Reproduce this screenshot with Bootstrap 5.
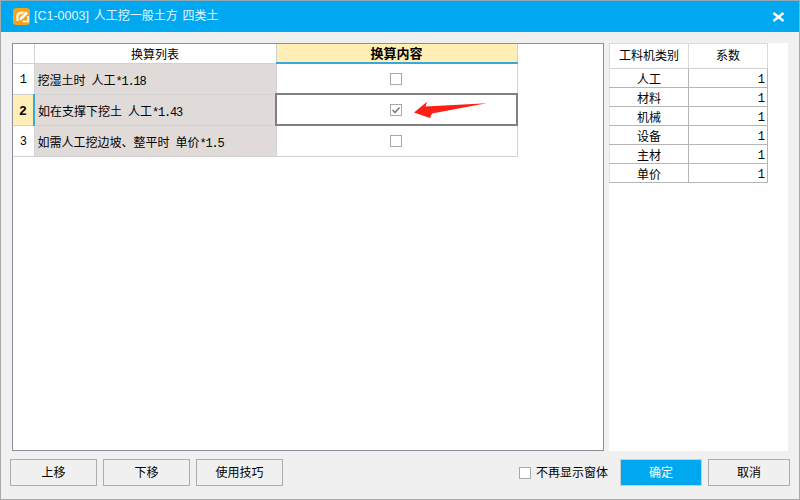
<!DOCTYPE html>
<html lang="zh-CN">
<head>
<meta charset="utf-8">
<title>换算</title>
<link href="https://cdn.jsdelivr.net/npm/bootstrap@5.3.0/dist/css/bootstrap.min.css" rel="stylesheet">
<style>
html,body{margin:0;width:800px;height:500px;overflow:hidden;background:#f0f0f0}
body{font-family:"Liberation Sans","Noto Sans CJK SC",sans-serif;font-size:12px;color:#000}
.win{width:800px;height:500px;border:1px solid #a9a9a9;border-top-color:#8fa9b8;background:#f0f0f0}
.tbar{height:31px;background:#00a8f0;color:#e8f7ff;font-size:12px;word-spacing:1.5px;padding-left:12px;padding-right:14px}
.tbar .lat{font-size:12.5px}
.logo{width:17px;height:17px;margin-right:4px}
.xbtn{width:13px;height:10px}
.body{height:419px;padding:11px 11px 0 11px;gap:5px}
.lpane{width:592px;height:408px;background:#fff;border:1px solid #8d8d99;position:relative}
.rpane{width:179px;height:408px;background:#fff}
.grid1,.grid2{table-layout:fixed;border-collapse:collapse;margin:0}
.grid1 td,.grid1 th{padding:0;border:1px solid #d2d2d2;font-weight:400;font-size:12px;vertical-align:middle;line-height:1;color:#000;box-shadow:none;background:transparent}
.grid1{width:504px}
.grid1 .c0{width:21px}.grid1 .c1{width:242px}.grid1 .c2{width:241px}
.grid1 tr.hd{height:19px}.grid1 tr.rw{height:31px}
.grid1 tr>*:first-child{border-left:0}
.grid1 tr.hd>*{border-top:0;padding-top:3px}
.grid1 th.act{background:#ffeeb5;font-weight:700;font-size:13px;border-bottom:2px solid #37a8dc;padding-top:0}
.grid1 td.num{font-family:"Liberation Mono",monospace;font-size:12px;text-align:center;padding-top:3px}
.grid1 td.cur{background:#ffeeb5;font-weight:700;border-right:2px solid #37a8dc;font-size:13px}
.grid1 td.txt{background:#e0dbd8;padding:5px 0 0 3px;text-align:left;word-spacing:2.7px}
.grid1 td.sel{border:2px solid #808080}
.grid1 td.box{padding-right:1px}
.mono{font-family:"Liberation Mono",monospace;letter-spacing:-1.2px}
.cbx{display:block;width:12px;height:12px;margin:0 auto;border:1px solid #a9a9a9;background:#fff}
.cbx svg{display:block}
.arrow{position:absolute;left:401px;top:56px;width:74px;height:20px}
.grid2{width:158px}
.grid2 td{padding:3px 0 0;border:1px solid #b5b5b5;font-size:12px;line-height:1;height:19px;text-align:center;vertical-align:middle;color:#000;background:transparent}
.grid2 tr.hd td{height:25px;padding-top:0;border-color:#dadada;border-bottom-color:#d0d0d0}
.grid2 td.v{text-align:right;padding-right:2px;font-family:"Liberation Mono",monospace;font-size:12px}
.grid2 .k{width:79px;border-left-color:#e4e4e4}
.grid2 .vw{width:79px}
.foot{padding:8px 9px 0 9px;height:40px}
.xb{height:27px;width:87px;padding:1px 0 0;border:1px solid #adadad;border-radius:0;background:#f0f0f0;color:#000;font-size:12px;line-height:1}
.xb.wide{width:82px}
.xb.pri{background:#00a8f0;color:#fff;border-color:#cdcdcd}
.xb:hover{background:#f0f0f0;color:#000}
.xb.pri:hover{background:#00a8f0;color:#fff}
.gp6{gap:6px}
.chk{margin-right:6px;gap:5px}
</style>
</head>
<body>
<div class="win d-flex flex-column">
  <div class="tbar d-flex align-items-center">
    <svg class="logo" viewBox="0 0 17 17"><rect width="17" height="17" rx="3.5" fill="#f6a21d"/><path d="M3 9.5 Q3 3.5 9 3.5 L12 3.5 L9.5 6 Q6 5.6 5.6 9 L5.6 13 L3.6 13 Z" fill="#fff3d8"/><path d="M6.5 12.5 L7 9.5 L13 3.5 L15 5.5 L9 11.5 Z" fill="#fff"/><path d="M9.5 13.5 L15 13.5 L15 8" fill="none" stroke="#fff" stroke-width="1.6"/></svg>
    <span><span class="lat">[C1-0003]</span> 人工挖一般土方 四类土</span>
    <svg class="xbtn ms-auto" viewBox="0 0 13 10"><path d="M1.5 1 L11.5 9 M11.5 1 L1.5 9" stroke="#fff" stroke-width="2.4" fill="none"/></svg>
  </div>
  <div class="body d-flex">
    <div class="lpane">
      <table class="table grid1">
        <colgroup><col class="c0"><col class="c1"><col class="c2"></colgroup>
        <tr class="hd"><th></th><th class="text-center">换算列表</th><th class="act text-center">换算内容</th></tr>
        <tr class="rw"><td class="num">1</td><td class="txt">挖湿土时 人工<span class="mono">*1.18</span></td><td class="box"><span class="cbx"></span></td></tr>
        <tr class="rw"><td class="num cur">2</td><td class="txt">如在支撑下挖土 人工<span class="mono">*1.43</span></td><td class="sel box"><span class="cbx"><svg width="10" height="10" viewBox="0 0 10 10"><path d="M1.5 5 L4 7.5 L8.5 2.5" fill="none" stroke="#6c6c78" stroke-width="1.3"/></svg></span></td></tr>
        <tr class="rw"><td class="num">3</td><td class="txt">如需人工挖边坡、整平时 单价<span class="mono">*1.5</span></td><td class="box"><span class="cbx"></span></td></tr>
      </table>
      <svg class="arrow" viewBox="0 0 74 20"><path d="M0 12.5 L13 1.7 L11.5 6.5 L72.5 3.3 L18 13.5 L16 18 Z" fill="#fb2015"/></svg>
    </div>
    <div class="rpane">
      <table class="table grid2">
        <tr class="hd"><td class="k">工料机类别</td><td class="vw">系数</td></tr>
        <tr><td class="k">人工</td><td class="v">1</td></tr>
        <tr><td class="k">材料</td><td class="v">1</td></tr>
        <tr><td class="k">机械</td><td class="v">1</td></tr>
        <tr><td class="k">设备</td><td class="v">1</td></tr>
        <tr><td class="k">主材</td><td class="v">1</td></tr>
        <tr><td class="k">单价</td><td class="v">1</td></tr>
      </table>
    </div>
  </div>
  <div class="foot d-flex align-items-start">
    <div class="d-flex gp6">
      <button class="btn xb">上移</button>
      <button class="btn xb">下移</button>
      <button class="btn xb">使用技巧</button>
    </div>
    <div class="d-flex gp6 ms-auto align-items-center">
      <div class="d-flex align-items-center chk"><span class="cbx"></span><span>不再显示窗体</span></div>
      <button class="btn xb wide pri">确定</button>
      <button class="btn xb wide">取消</button>
    </div>
  </div>
</div>
<script src="https://cdn.jsdelivr.net/npm/bootstrap@5.3.0/dist/js/bootstrap.bundle.min.js"></script>
</body>
</html>
